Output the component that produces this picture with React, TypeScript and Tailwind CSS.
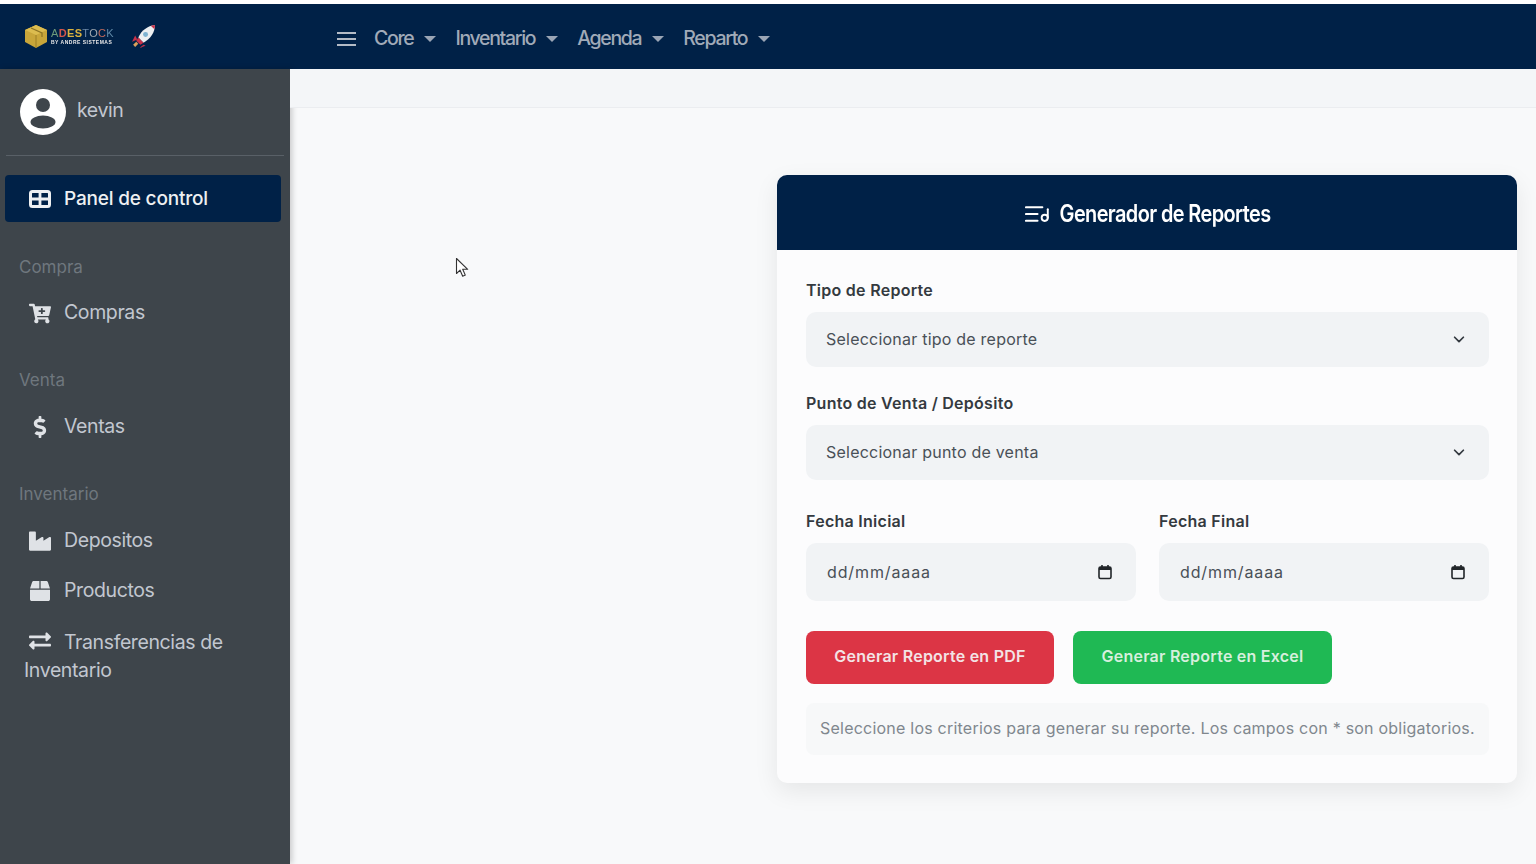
import { FaCartPlus, FaDollarSign, FaIndustry, FaExchangeAlt, FaBox } from "react-icons/fa";

function Caret() {
  return <span className="ml-[11px] w-0 h-0 border-x-[6px] border-x-transparent border-t-[6px] border-t-[#9aa5b5]" />;
}

function NavItem({ label, gap }: { label: string; gap: string }) {
  return (
    <div className={`flex items-center ${gap}`}>
      <span className="text-[19.5px] tracking-[-0.068em] text-[#a0aab8] font-medium">{label}</span>
      <Caret />
    </div>
  );
}

function GridIcon() {
  return (
    <svg width="22" height="18" viewBox="0 0 22 18" fill="none">
      <rect x="1.5" y="1.5" width="19" height="15" rx="2" stroke="#eef0f2" strokeWidth="3" />
      <path d="M11 1v16M1 9h20" stroke="#eef0f2" strokeWidth="2.8" />
    </svg>
  );
}

function Logo() {
  return (
    <div className="flex items-center ml-[24px] w-[266px] blur-[0.5px]">
      <svg width="24" height="23" viewBox="0 0 24 23">
        <path d="M12 0l11 5v12l-11 6L1 17V5z" fill="#c9a63a" />
        <path d="M12 0l11 5-11 5L1 5z" fill="#dcbc4f" />
        <path d="M12 10v13" stroke="#9c7f25" strokeWidth="1" />
        <path d="M7 3l11 5v4" stroke="#8d7324" strokeWidth="1.2" fill="none" />
      </svg>
      <div className="ml-[3px] flex flex-col items-start leading-none font-['Liberation_Sans',sans-serif]">
        <span className="text-[11px] leading-[11px] tracking-[0.03em] text-[#5f8aa8]">
          <span className="text-[#6d9a7a]">A</span>
          <span className="text-[#d2564c] font-bold">D</span>
          <span className="text-[#d9b13f] font-bold">E</span>
          <span className="text-[#d9b13f] font-bold">S</span>
          <span className="text-[#6d8aa8]">T</span>
          <span className="text-[#a0a8b0]">O</span>
          <span className="text-[#c06a5c]">C</span>
          <span className="text-[#5f8aa8]">K</span>
        </span>
        <span className="text-[5px] leading-[6px] font-bold tracking-[0.1em] text-[#e8e8e8]">BY ANDRE SISTEMAS</span>
      </div>
      <svg className="ml-[16px]" width="27" height="27" viewBox="0 0 26 26">
        <path d="M5 12l-3 6 5-2z" fill="#c8324a" />
        <path d="M13 21l-4 3 6-2z" fill="#c8324a" />
        <path d="M3 21l3-3 2 2-3 3z" fill="#d9a05b" />
        <path d="M8 14C11 7 17 3 24 2c0 7-4 13-11 17z" fill="#eceff1" />
        <path d="M20 2.6l4-.6c0 1.4-.2 2.8-.5 4z" fill="#c8324a" />
        <path d="M8 14l5 5-3 2-4-4z" fill="#c8324a" />
        <circle cx="15" cy="11" r="2.4" fill="#7db2d0" />
      </svg>
    </div>
  );
}

function SideItem({ icon, label }: { icon: React.ReactNode; label: string }) {
  return (
    <div className="flex items-center h-[50px] pl-[29px] text-[19.5px] tracking-[-0.02em] text-[#c2c7d0]">
      <span className="w-[22px] flex justify-center mr-[13px]">{icon}</span>
      {label}
    </div>
  );
}

function Section({ title }: { title: string }) {
  return <div className="pl-[19px] text-[17px] leading-[24px] text-[#6f777e]">{title}</div>;
}

function Field({ label, value }: { label: string; value: string }) {
  return (
    <div>
      <div className="text-[16px] leading-[24px] font-semibold tracking-[0.017em] text-[#343a40] mb-[10px]">{label}</div>
      <div className="h-[55px] bg-[#f1f3f5] rounded-[10px] flex items-center justify-between pl-[20px] pr-[23px] pb-[2px] text-[16px] tracking-[0.014em] text-[#495057]">
        {value}
        <svg width="14" height="14" viewBox="0 0 16 16" fill="none">
          <path d="M3 6l5 5 5-5" stroke="#343a40" strokeWidth="2" strokeLinecap="round" strokeLinejoin="round" />
        </svg>
      </div>
    </div>
  );
}

function DateField({ label }: { label: string }) {
  return (
    <div className="flex-1">
      <div className="text-[16px] leading-[24px] font-semibold tracking-[0.017em] text-[#343a40] mb-[10px]">{label}</div>
      <div className="h-[58px] bg-[#f1f3f5] rounded-[10px] flex items-center justify-between pl-[21px] pr-[23px] text-[16px] tracking-[0.055em] text-[#495057]">
        dd/mm/aaaa
        <svg width="16" height="16" viewBox="0 0 16 16" fill="none">
          <rect x="2" y="3" width="12" height="11.5" rx="1.5" stroke="#212529" strokeWidth="1.6" />
          <rect x="2" y="3" width="12" height="3" fill="#212529" />
          <path d="M5 1v3M11 1v3" stroke="#212529" strokeWidth="1.6" />
        </svg>
      </div>
    </div>
  );
}

export default function App() {
  return (
    <div className="h-screen overflow-hidden flex flex-col bg-[#f8f9fa] font-['Inter',sans-serif]">
      <div className="h-1 bg-white shrink-0" />
      <header className="h-[65px] bg-[#002147] flex items-center shrink-0">
        <Logo />
        <div className="flex items-center pl-[47px] pt-[4px]">
          <svg width="19" height="16" viewBox="0 0 19 16" fill="none" className="mr-[18px]">
            <path d="M0 2h19M0 8h19M0 14h19" stroke="#b3bbc6" strokeWidth="2.2" />
          </svg>
          <NavItem label="Core" gap="mr-[19px]" />
          <NavItem label="Inventario" gap="mr-[19px]" />
          <NavItem label="Agenda" gap="mr-[19px]" />
          <NavItem label="Reparto" gap="" />
        </div>
      </header>
      <div className="flex flex-1 min-h-0">
        <aside className="w-[290px] shrink-0 bg-[#3e454b] shadow-[2px_0_6px_rgba(0,0,0,0.2)]">
          <div className="mx-[6px] h-[87px] border-b border-[#596067] flex items-center pl-[14px]">
            <span className="w-[46px] h-[46px] rounded-full bg-white flex items-center justify-center">
              <svg width="46" height="46" viewBox="0 0 46 46">
                <circle cx="23" cy="16" r="7" fill="#3e454b" />
                <ellipse cx="23" cy="33" rx="12.5" ry="6.5" fill="#3e454b" />
              </svg>
            </span>
            <span className="ml-[11px] text-[19.5px] tracking-[-0.02em] text-[#c2c7d0] mt-[-3px]">kevin</span>
          </div>
          <div className="mt-[19px] mx-[5px] h-[47px] w-[276px] rounded-[4px] bg-[#002147] flex items-center pl-[24px] pt-[2px] text-[19px] tracking-[-0.01em] text-[#eef0f2] font-medium">
            <span className="mr-[13px] flex mt-[-2px]"><GridIcon /></span>
            Panel de control
          </div>
          <div className="mt-[33px]"><Section title="Compra" /></div>
          <div className="mt-[9px]">
            <SideItem icon={<FaCartPlus className="text-[25px] text-[#dfe2e6]" />} label="Compras" />
          </div>
          <div className="mt-[30px]"><Section title="Venta" /></div>
          <div className="mt-[10px]">
            <SideItem icon={<FaDollarSign className="text-[22px] text-[#dfe2e6]" />} label="Ventas" />
          </div>
          <div className="mt-[30px]"><Section title="Inventario" /></div>
          <div className="mt-[10px]">
            <SideItem icon={<FaIndustry className="text-[22px] text-[#dfe2e6]" />} label="Depositos" />
            <SideItem icon={<FaBox className="text-[20px] text-[#dfe2e6]" />} label="Productos" />
            <div className="pl-[24px] pr-[20px] pt-[12px] text-[19.5px] leading-[28px] tracking-[-0.02em] text-[#c2c7d0]">
              <span className="inline-flex w-[22px] justify-center ml-[5px] mr-[13px] align-[-3px]">
                <FaExchangeAlt className="text-[22px] text-[#dfe2e6]" />
              </span>
              Transferencias de Inventario
            </div>
          </div>
        </aside>
        <main className="flex-1 min-w-0">
          <div className="h-[39px] bg-[#f4f6f8] border-b border-[#ebedf0]" />
          <div className="flex justify-end pr-[19px] pt-[67px]">
            <section className="w-[740px] h-[608px] bg-[#fcfcfd] rounded-[10px] shadow-[0_8px_24px_rgba(0,0,0,0.08)]">
              <div className="h-[75px] rounded-t-[10px] bg-[#002147] flex items-center justify-center text-white pt-[2px] pl-[3px]">
                <svg className="mr-[8px]" width="25" height="18" viewBox="0 0 26 18" fill="none">
                  <path d="M1 2h17M1 9h12M1 16h12" stroke="#fff" strokeWidth="2.2" strokeLinecap="round" />
                  <circle cx="20.5" cy="13" r="3.2" stroke="#fff" strokeWidth="2" />
                  <path d="M23.7 13V4" stroke="#fff" strokeWidth="2" strokeLinecap="round" />
                </svg>
                <h1 className="text-[24px] font-semibold tracking-[-0.03em] scale-x-[0.83] -mx-[20px]">Generador de Reportes</h1>
              </div>
              <div className="pt-[28px] px-[29px] pr-[28px]">
                <Field label="Tipo de Reporte" value="Seleccionar tipo de reporte" />
                <div className="mt-[24px]">
                  <Field label="Punto de Venta / Depósito" value="Seleccionar punto de venta" />
                </div>
                <div className="mt-[29px] flex gap-[23px]">
                  <DateField label="Fecha Inicial" />
                  <DateField label="Fecha Final" />
                </div>
                <div className="mt-[30px] flex gap-[19px]">
                  <button className="w-[248px] h-[53px] rounded-[8px] bg-[#dc3545] text-[#f3e3e5] text-[16px] font-semibold tracking-[0.015em] pb-[4px]">
                    Generar Reporte en PDF
                  </button>
                  <button className="w-[259px] h-[53px] rounded-[8px] bg-[#1fb954] text-[#d6efdd] text-[16px] font-semibold tracking-[0.015em] pb-[4px]">
                    Generar Reporte en Excel
                  </button>
                </div>
                <div className="mt-[19px] h-[52px] rounded-[8px] bg-[#f7f8f9] flex items-center pl-[14px] pb-[2px] text-[16px] tracking-[0.014em] text-[#80878e] whitespace-nowrap">
                  Seleccione los criterios para generar su reporte. Los campos con * son obligatorios.
                </div>
              </div>
            </section>
          </div>
        </main>
      </div>
      <svg className="absolute left-[455px] top-[257px]" width="15" height="21" viewBox="0 0 15 21">
        <path d="M1.5 1.5v15l3.6-3.3 2.6 6 2.6-1.1-2.6-5.8h5z" fill="#fff" stroke="#333" strokeWidth="1.1" strokeLinejoin="round" />
      </svg>
    </div>
  );
}
